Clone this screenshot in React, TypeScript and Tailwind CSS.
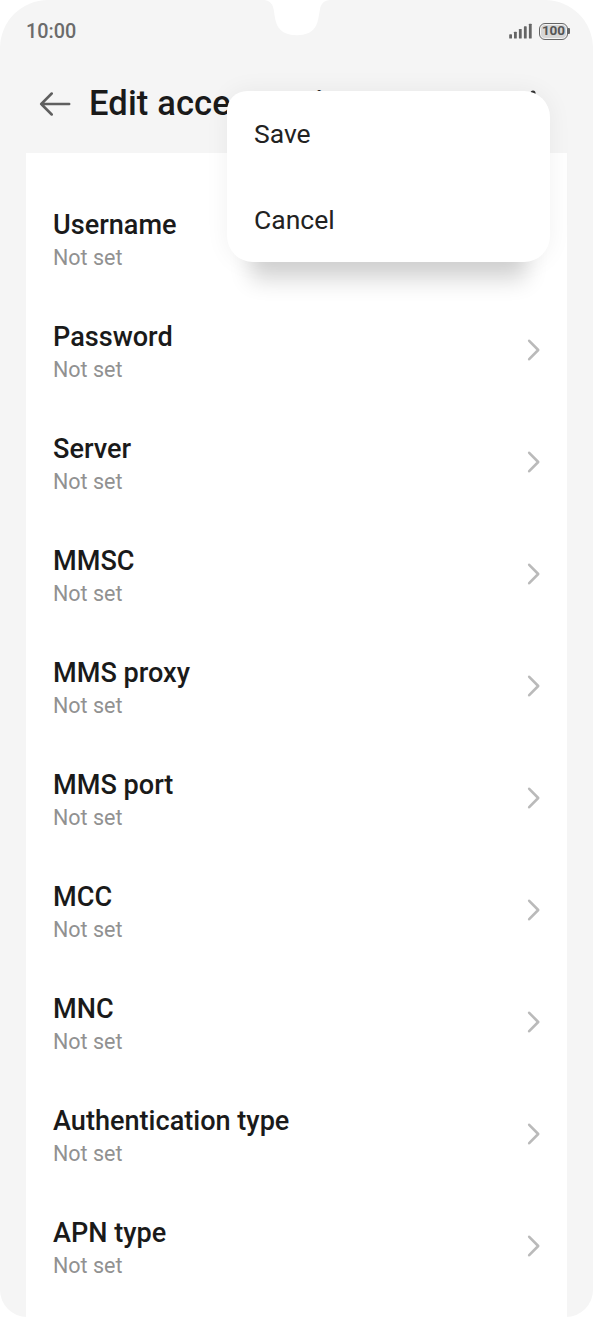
import React from 'react';

interface Setting {
  label: string;
  value: string;
}

const settings: Setting[] = [
  { label: 'Username', value: 'Not set' },
  { label: 'Password', value: 'Not set' },
  { label: 'Server', value: 'Not set' },
  { label: 'MMSC', value: 'Not set' },
  { label: 'MMS proxy', value: 'Not set' },
  { label: 'MMS port', value: 'Not set' },
  { label: 'MCC', value: 'Not set' },
  { label: 'MNC', value: 'Not set' },
  { label: 'Authentication type', value: 'Not set' },
  { label: 'APN type', value: 'Not set' },
];

function SignalIcon() {
  return (
    <svg width="24" height="16" viewBox="0 0 24 16" fill="#666666">
      <rect x="0.2" y="11.3" width="2.8" height="4.2" rx="0.6" />
      <rect x="5" y="8.7" width="2.8" height="6.8" rx="0.6" />
      <rect x="9.9" y="5.9" width="2.8" height="9.6" rx="0.6" />
      <rect x="14.9" y="3.3" width="2.8" height="12.2" rx="0.6" />
      <rect x="19.9" y="0.7" width="2.8" height="14.8" rx="0.6" />
    </svg>
  );
}

function Battery() {
  return (
    <div className="flex items-center">
      <div className="flex h-[17px] w-[29px] items-center justify-center rounded-[6px] border border-[#666666] p-[1px]">
        <div className="flex h-full w-full items-center justify-center rounded-[4px] bg-[#d6d6d6] text-[13.5px] font-bold leading-none text-[#555555]">
          100
        </div>
      </div>
      <div className="h-[6px] w-[2px] rounded-r-[1px] bg-[#666666]" />
    </div>
  );
}

function StatusBar() {
  return (
    <div className="flex h-[62px] items-center justify-between pl-[26px] pr-[23px]">
      <span className="pt-[2px] text-[19.8px] font-medium leading-6 text-[#6b6b6b]">10:00</span>
      <div className="flex items-center gap-[6px]">
        <SignalIcon />
        <Battery />
      </div>
      <svg
        className="absolute left-[264px] top-0"
        width="66"
        height="36"
        viewBox="0 0 66 36"
        fill="#ffffff"
      >
        <path d="M0 0C5 .5 8.5 3 9.6 9C11 18 11.5 23 14.5 27.5C18 32.5 24 35.2 32.8 35.2C41.5 35.2 47.5 32.5 51 27.5C54 23 54.5 18 56 9C57 3 60.5 .5 66 0Z" />
      </svg>
    </div>
  );
}

function Header() {
  return (
    <div className="flex h-[91px] items-center pb-[8px] pl-[39px] pr-[50px]">
      <svg
        width="32"
        height="24"
        viewBox="0 0 32 24"
        fill="none"
        stroke="#5f5f5f"
        strokeWidth="2.5"
        strokeLinecap="round"
        strokeLinejoin="round"
      >
        <path d="M12.7 1.5L2.2 12L12.7 22.5M2.2 12H30.2" />
      </svg>
      <h1 className="ml-[18px] flex-1 whitespace-nowrap pb-[2px] text-[34.5px] font-medium leading-10 tracking-[0.15px] text-[#1a1a1a]">
        Edit access point
      </h1>
      <svg width="20" height="28" viewBox="0 0 20 28" fill="#333333">
        <circle cx="10" cy="3" r="2.5" />
        <circle cx="10" cy="14" r="2.5" />
        <circle cx="10" cy="25" r="2.5" />
      </svg>
    </div>
  );
}

function SettingRow({ label, value }: Setting) {
  return (
    <div className="flex h-[112px] items-center justify-between pl-[27px] pr-[25px]">
      <div className="pt-[7px]">
        <div className="text-[27.1px] font-medium leading-8 text-[#1a1a1a]">{label}</div>
        <div className="text-[21.5px] leading-[33px] text-[#919191]">{value}</div>
      </div>
      <svg
        width="16"
        height="24"
        viewBox="0 0 16 24"
        fill="none"
        stroke="#bababa"
        strokeWidth="2.6"
        strokeLinecap="round"
        strokeLinejoin="round"
      >
        <path d="M3.2 2.8L12.2 12L3.2 21.2" />
      </svg>
    </div>
  );
}

function PopupMenu() {
  return (
    <div className="absolute left-[227px] top-[90.5px] h-[171.5px] w-[323px] rounded-[26px] rounded-tl-[20px] bg-white pt-[0.5px] shadow-[0_0_24px_rgba(0,0,0,0.06),0_42px_22px_-24px_rgba(0,0,0,0.16)]">
      {['Save', 'Cancel'].map((item) => (
        <div
          key={item}
          className="flex h-[86px] items-center pl-[27px] text-[26.5px] leading-8 text-[#222222]"
        >
          {item}
        </div>
      ))}
    </div>
  );
}

export default function App() {
  return (
    <div className="h-[1318px] w-[593px] bg-white font-['Roboto',sans-serif]">
      <div className="relative flex h-[1317px] flex-col overflow-hidden rounded-t-[48px] rounded-b-[27px] bg-[#f5f5f5]">
        <StatusBar />
        <Header />
        <div className="mx-[26px] w-[541px] flex-1 bg-white pt-[29px]">
          {settings.map((setting) => (
            <SettingRow key={setting.label} {...setting} />
          ))}
        </div>
        <PopupMenu />
      </div>
    </div>
  );
}
